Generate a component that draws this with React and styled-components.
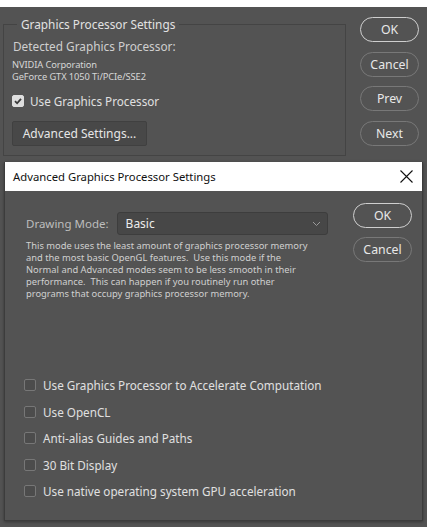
import React from "react";
import styled, { createGlobalStyle } from "styled-components";

const GlobalStyle = createGlobalStyle`
  html, body {
    margin: 0;
    padding: 0;
    background: #ffffff;
  }
  body {
    font-family: "Noto Sans", "Open Sans", sans-serif;
    width: 427px;
    height: 527px;
    overflow: hidden;
  }
`;

function Check({ checked }) {
  return (
    <Box checked={checked}>
      {checked && (
        <svg width="10" height="10" viewBox="0 0 10 10">
          <path d="M2 5.2 L4.1 7.3 L8 2.8" stroke="#3a3a3a" strokeWidth="1.8" fill="none" />
        </svg>
      )}
    </Box>
  );
}

const options = [
  "Use Graphics Processor to Accelerate Computation",
  "Use OpenCL",
  "Anti-alias Guides and Paths",
  "30 Bit Display",
  "Use native operating system GPU acceleration",
];

export default function App() {
  return (
    <>
      <GlobalStyle />
      <Page>
        <Window>
          <GroupBox>
            <Legend>Graphics Processor Settings</Legend>
            <Detected>Detected Graphics Processor:</Detected>
            <SmallInfo>
              <div>NVIDIA Corporation</div>
              <div>GeForce GTX 1050 Ti/PCIe/SSE2</div>
            </SmallInfo>
            <CheckRow>
              <Check checked />
              <CheckLabel>Use Graphics Processor</CheckLabel>
            </CheckRow>
            <FlatButton>Advanced Settings...</FlatButton>
          </GroupBox>
          <ButtonColumn>
            <Pill primary>OK</Pill>
            <Pill>Cancel</Pill>
            <Pill>Prev</Pill>
            <Pill>Next</Pill>
          </ButtonColumn>
        </Window>

        <Dialog>
          <TitleBar>
            <Title>Advanced Graphics Processor Settings</Title>
            <svg width="13" height="13" viewBox="0 0 13 13">
              <path d="M0.5 0.5 L12.5 12.5 M12.5 0.5 L0.5 12.5" stroke="#111" strokeWidth="1.1" />
            </svg>
          </TitleBar>
          <DialogBody>
            <DialogMain>
              <ModeRow>
                <ModeLabel>Drawing Mode:</ModeLabel>
                <Select>
                  <span>Basic</span>
                  <svg width="9" height="6" viewBox="0 0 9 6">
                    <path d="M1 1 L4.5 4.5 L8 1" stroke="#9a9a9a" strokeWidth="1" fill="none" />
                  </svg>
                </Select>
              </ModeRow>
              <Description>
                This mode uses the least amount of graphics processor memory
                <br />
                and the most basic OpenGL features.&nbsp; Use this mode if the
                <br />
                Normal and Advanced modes seem to be less smooth in their
                <br />
                performance.&nbsp; This can happen if you routinely run other
                <br />
                programs that occupy graphics processor memory.
              </Description>
              <OptionList>
                {options.map((o) => (
                  <OptionRow key={o}>
                    <Check />
                    <CheckLabel>{o}</CheckLabel>
                  </OptionRow>
                ))}
              </OptionList>
            </DialogMain>
            <DialogButtons>
              <Pill primary>OK</Pill>
              <Pill>Cancel</Pill>
            </DialogButtons>
          </DialogBody>
        </Dialog>
      </Page>
    </>
  );
}

const Page = styled.div`
  position: relative;
  width: 427px;
  height: 527px;
  padding-top: 7px;
  box-sizing: border-box;
`;

const Window = styled.div`
  height: 520px;
  background: #535353;
  display: flex;
  align-items: flex-start;
  padding: 10px 8px 0 3px;
  box-sizing: border-box;
`;

const GroupBox = styled.fieldset`
  width: 343px;
  height: 139px;
  box-sizing: border-box;
  margin: 0;
  padding: 0 8px;
  border: 1px solid #444444;
  display: flex;
  flex-direction: column;
  align-items: flex-start;
`;

const Legend = styled.legend`
  margin-left: 5px;
  padding: 0 4px;
  font-size: 11.8px;
  color: #e2e2e2;
  line-height: 14px;
`;

const Detected = styled.div`
  font-size: 11.8px;
  color: #cfcfcf;
  margin-top: 7px;
  margin-left: 1px;
`;

const SmallInfo = styled.div`
  font-size: 9.3px;
  line-height: 12px;
  color: #d6d6d6;
  margin-top: 5px;
  letter-spacing: -0.1px;
  display: flex;
  flex-direction: column;
`;

const CheckRow = styled.div`
  display: flex;
  align-items: center;
  gap: 6px;
  margin-top: 10px;
`;

const Box = styled.div`
  width: 12px;
  height: 12px;
  box-sizing: border-box;
  border-radius: 2px;
  flex: none;
  display: flex;
  align-items: center;
  justify-content: center;
  border: 1px solid ${(p) => (p.checked ? "#dedede" : "#777777")};
  background: ${(p) => (p.checked ? "#dedede" : "#4c4c4c")};
`;

const CheckLabel = styled.span`
  font-size: 11.7px;
  color: #e0e0e0;
  white-space: nowrap;
`;

const FlatButton = styled.div`
  margin-top: 12px;
  width: 135px;
  height: 25px;
  box-sizing: border-box;
  background: #484848;
  border: 1px solid #404040;
  border-radius: 2px;
  color: #e6e6e6;
  font-size: 12px;
  display: flex;
  align-items: center;
  justify-content: center;
`;

const ButtonColumn = styled.div`
  margin-left: auto;
  display: flex;
  flex-direction: column;
  gap: 9.5px;
`;

const Pill = styled.div`
  width: 59px;
  height: 25px;
  box-sizing: border-box;
  border-radius: 13px;
  border: 1.5px solid ${(p) => (p.primary ? "#cfcfcf" : "#787878")};
  color: #e8e8e8;
  font-size: 12.3px;
  display: flex;
  align-items: center;
  justify-content: center;
`;

const Dialog = styled.div`
  position: absolute;
  left: 4px;
  top: 162px;
  width: 419px;
  height: 359px;
  box-sizing: border-box;
  background: #535353;
  border: 1px solid #3c3c3c;
  border-top: none;
  box-shadow: 0 1px 3px rgba(0, 0, 0, 0.35);
  display: flex;
  flex-direction: column;
`;

const TitleBar = styled.div`
  height: 29px;
  background: #ffffff;
  display: flex;
  align-items: center;
  justify-content: space-between;
  padding: 0 9px 0 8px;
  flex: none;
`;

const Title = styled.span`
  font-size: 11.3px;
  color: #111111;
`;

const DialogBody = styled.div`
  flex: 1;
  display: flex;
  padding: 12px 10px 0 21px;
`;

const DialogMain = styled.div`
  flex: 1;
  display: flex;
  flex-direction: column;
  padding-top: 9px;
`;

const ModeRow = styled.div`
  display: flex;
  align-items: center;
  gap: 8px;
`;

const ModeLabel = styled.span`
  font-size: 11.5px;
  color: #bdbdbd;
`;

const Select = styled.div`
  width: 211px;
  height: 23px;
  box-sizing: border-box;
  background: #474747;
  border: 1px solid #3d3d3d;
  border-radius: 3px;
  display: flex;
  align-items: center;
  justify-content: space-between;
  padding: 0 6px 0 8px;
  color: #ececec;
  font-size: 12px;
`;

const Description = styled.div`
  margin-top: 5px;
  font-size: 9.35px;
  line-height: 12px;
  color: #d0d0d0;
  white-space: nowrap;
`;

const OptionList = styled.div`
  margin-top: auto;
  margin-bottom: 20px;
  display: flex;
  flex-direction: column;
  gap: 8.5px;
  margin-left: -2px;
`;

const OptionRow = styled.div`
  display: flex;
  align-items: center;
  gap: 7px;
  height: 18px;
`;

const DialogButtons = styled.div`
  display: flex;
  flex-direction: column;
  gap: 9px;
`;
